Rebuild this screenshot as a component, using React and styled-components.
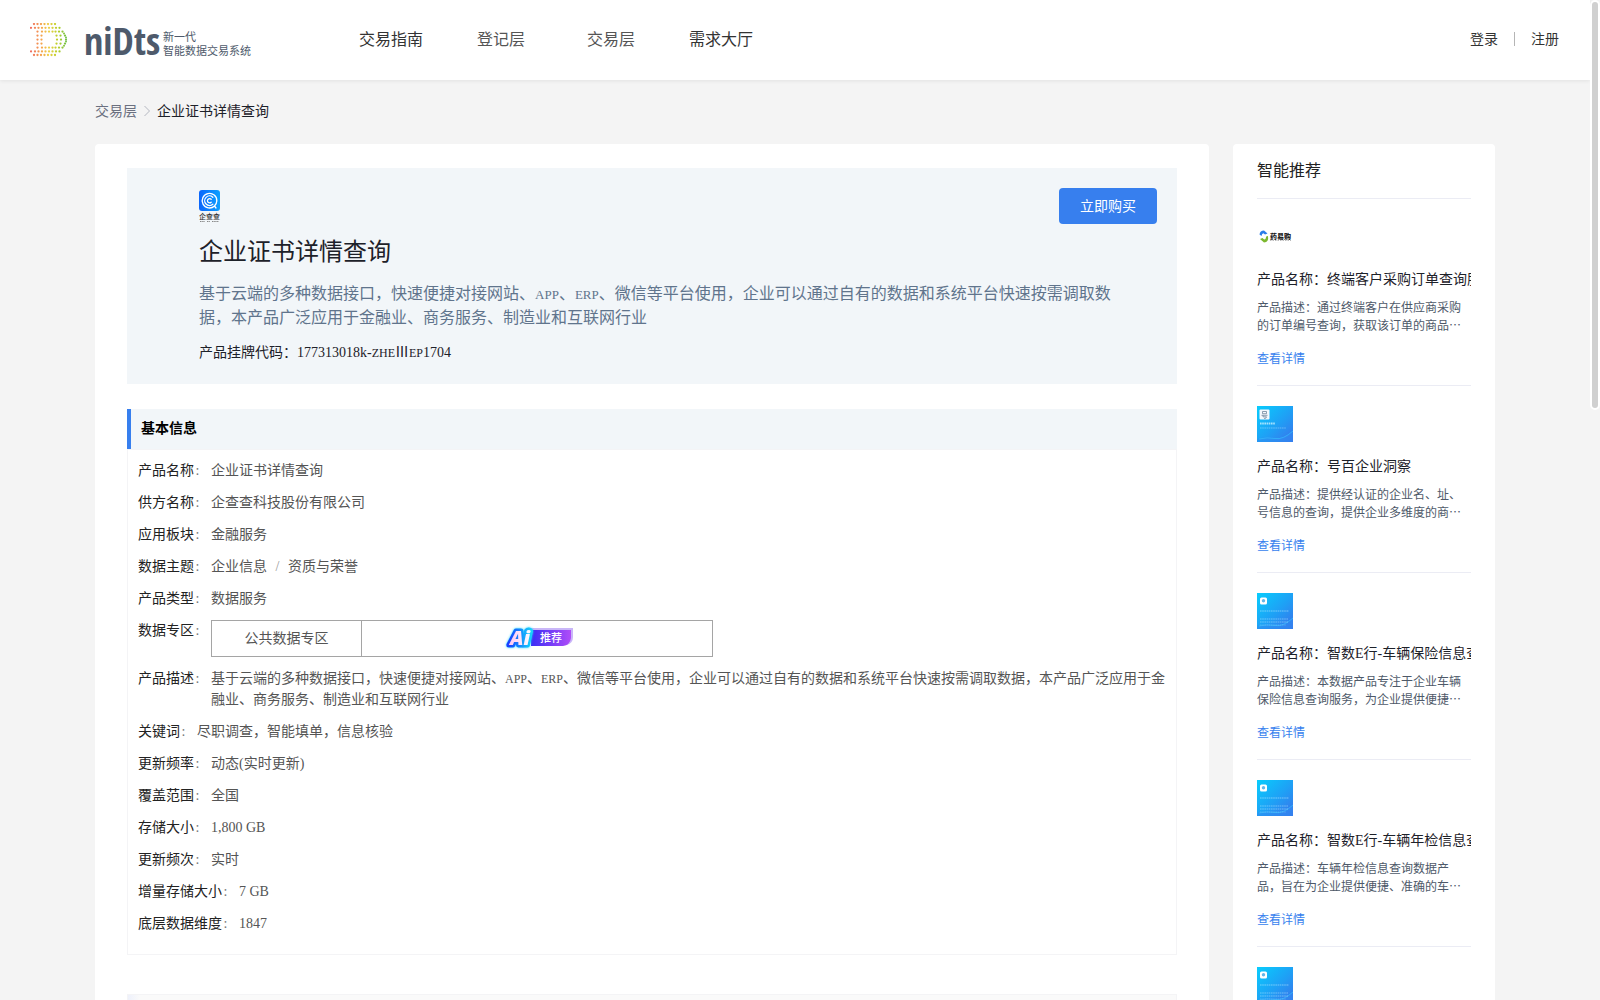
import React from 'react';
import styled, { createGlobalStyle, css } from 'styled-components';

const Global = createGlobalStyle`
  * { box-sizing: border-box; }
  html, body, #root { margin: 0; height: 100%; }
  body {
    background: #f4f4f4;
    color: #1d2129;
    font-family: "Liberation Serif", "Noto Sans CJK SC", sans-serif;
    font-size: 14px;
    line-height: 21px;
    overflow: hidden;
  }
  h1, h2, h3, p, ul, dl, dd, ol { margin: 0; padding: 0; font-weight: 400; }
  ul, ol { list-style: none; }
  a { color: inherit; text-decoration: none; }
  button { font-family: inherit; border: 0; cursor: pointer; }
`;

const Viewport = styled.div`
  height: 100vh;
  overflow: auto;
  padding-right: 10px;
  scrollbar-width: none;
`;
const ScrollThumb = styled.div`
  position: fixed;
  top: 0;
  right: 0;
  width: 10px;
  height: 41vh;
  border: 2px solid #fff;
  border-radius: 5px;
  background: #d0d0d0;
`;

const Header = styled.header`
  display: flex;
  align-items: center;
  height: 80px;
  padding: 0 31px 0 30px;
  background: #fff;
  box-shadow: 0 1px 4px rgba(0, 0, 0, 0.08);
`;
const Brand = styled.a`
  display: flex;
  align-items: center;
  width: 306px;
  color: #4e5a6b;
`;
const BrandName = styled.span`
  margin-left: 16px;
  width: 79px;
  font: 700 38px/40px "Liberation Sans Narrow", "Open Sans Condensed", "Liberation Sans", sans-serif;
`;
const BrandSub = styled.span`
  padding-top: 6px;
  font: 400 11px/14px "Noto Sans CJK SC", sans-serif;
  white-space: nowrap;
`;
const Nav = styled.nav`
  display: flex;
  flex: 1;
`;
const NavLink = styled.a`
  width: 110px;
  text-align: center;
  font-size: 16px;
  line-height: 26px;
  color: ${(p) => (p.$soft ? '#555' : '#333')};
`;
const Account = styled.div`
  display: flex;
  align-items: center;
  padding-bottom: 2px;
  color: #333;
`;
const AccountRule = styled.span`
  width: 1px;
  height: 14px;
  margin: 0 16px;
  background: #b5b5b5;
`;

const Page = styled.div`
  max-width: 1400px;
  margin: 0 auto;
`;
const Crumbs = styled.nav`
  display: flex;
  align-items: center;
  gap: 7px;
  height: 64px;
  padding-bottom: 2px;
  color: #6b7080;
  svg { display: block; }
  strong { font-weight: 400; color: #1d2129; }
`;
const Columns = styled.div`
  display: flex;
  align-items: flex-start;
  gap: 24px;
`;
const Card = styled.main`
  flex: 1;
  min-width: 0;
  min-height: 1000px;
  padding: 24px 32px;
  border-radius: 4px;
  background: #fff;
`;
const Aside = styled.aside`
  width: 262px;
  padding: 0 24px;
  border-radius: 4px;
  background: #fff;
`;

const Hero = styled.section`
  display: flex;
  align-items: flex-start;
  justify-content: space-between;
  height: 216px;
  padding: 20px 20px 0 72px;
  background: #f2f6f9;
`;
const HeroText = styled.div`
  flex: 1;
  padding-top: 2px;
`;
const HeroTitle = styled.h1`
  margin-top: 10px;
  font-size: 24px;
  line-height: 36px;
`;
const HeroDesc = styled.p`
  margin: 12px -56px 0 0;
  font-size: 16px;
  line-height: 24px;
  color: #60748c;
`;
const HeroCode = styled.p`
  margin-top: 12px;
`;
const Latin = styled.span`
  font-size: ${(p) => (p.$large ? '13px' : '12px')};
  line-height: 1;
`;
const BuyButton = styled.button`
  width: 98px;
  height: 36px;
  padding: 0 0 2px;
  border-radius: 4px;
  background: #377fee;
  color: #fff;
  font-size: 14px;
`;

const Section = styled.section`
  margin-top: 25px;
`;
const SectionTitle = styled.h2`
  padding-left: 10px;
  border-left: 4px solid #377fee;
  background: #f2f6f9;
  font-size: 14px;
  font-weight: 700;
  line-height: 40px;
  color: #000;
`;
const Facts = styled.dl`
  display: flex;
  flex-direction: column;
  gap: 11px;
  padding: 10px 8px 20px 10px;
  border: 1px solid #f4f4f6;
`;
const Fact = styled.div`
  display: flex;
  gap: 10px;
`;
const FactLabel = styled.dt`
  display: flex;
  flex: none;
  color: #222;
`;
const Colon = styled.span`
  width: 7px;
  text-align: center;
  color: #777;
`;
const FactValue = styled.dd`
  color: #555;
`;
const Slash = styled.span`
  display: inline-block;
  width: 21px;
  text-align: center;
  color: #999;
`;
const Zone = styled.div`
  display: flex;
  width: 502px;
  height: 37px;
  border: 1px solid #a5a5a5;
`;
const ZoneCell = styled.div`
  display: flex;
  align-items: center;
  justify-content: center;
  ${(p) =>
    p.$grow
      ? css`flex: 1;`
      : css`
          width: 150px;
          border-right: 1px solid #a5a5a5;
        `}
`;
const NextSection = styled.section`
  height: 60px;
  margin-top: 39px;
  border: 1px solid #f4f4f6;
  background: linear-gradient(90deg, #eef1fb, #fafafa 12px);
`;

const AsideTitle = styled.h2`
  padding: 15px 0;
  font-size: 16px;
  line-height: 24px;
  color: #222;
`;
const Item = styled.li`
  height: 187px;
  padding-top: 20px;
  border-top: 1px solid #ebecf4;
  svg { display: block; }
`;
const ItemName = styled.h3`
  margin-top: 14px;
  overflow: hidden;
  font-size: 14px;
  line-height: 21px;
  white-space: nowrap;
`;
const ItemDesc = styled.p`
  margin-top: 8px;
  font: 400 12px/18px "Noto Sans CJK SC", sans-serif;
  color: #4e5969;
`;
const ItemLink = styled.a`
  display: block;
  margin-top: 16px;
  font-size: 12px;
  line-height: 18px;
  color: #377fee;
`;

const DOT_ROWS = [
  { y: 1, xs: [4, 7.5, 11, 14.5, 18, 21.5, 25] },
  { y: 4.8, xs: [1, 5, 8.5, 12, 15.5, 19, 22.5, 26, 29.5] },
  { y: 8.6, xs: [7.5, 12, 15.5, 19, 22.5, 25.5, 29, 32.5] },
  { y: 12.6, xs: [7.5, 11.5, 26.5, 30.5, 35] },
  { y: 16.6, xs: [7.5, 11.5, 27, 31, 36] },
  { y: 20.6, xs: [7.5, 11.5, 26.5, 30.5, 35] },
  { y: 24.6, xs: [7.5, 12, 15.5, 19, 22.5, 25.5, 29, 32.5] },
  { y: 28.4, xs: [1, 5, 8.5, 12, 15.5, 19, 22.5, 26, 29.5] },
  { y: 32, xs: [4, 7.5, 11, 14.5, 18, 21.5, 25] },
];

function BrandMark() {
  return (
    <svg width="38" height="34" viewBox="0 0 38 34" aria-hidden="true">
      <defs>
        <linearGradient id="mark" gradientUnits="userSpaceOnUse" x1="0" y1="0" x2="37" y2="0">
          <stop offset="0" stopColor="#ee6a63" />
          <stop offset="0.3" stopColor="#f5a34e" />
          <stop offset="0.5" stopColor="#eed04a" />
          <stop offset="0.75" stopColor="#b9cf26" />
          <stop offset="1" stopColor="#6cc04a" />
        </linearGradient>
      </defs>
      <g fill="url(#mark)">
        {DOT_ROWS.map((r) => r.xs.map((x) => <circle key={`${x}-${r.y}`} cx={x} cy={r.y} r="1.15" />))}
        <circle cx="36" cy="14.6" r="1" />
        <circle cx="36" cy="18.6" r="1" />
        <circle cx="34" cy="10.4" r="1" />
        <circle cx="34" cy="22.8" r="1" />
      </g>
    </svg>
  );
}

function VendorLogo() {
  return (
    <svg width="22" height="34" viewBox="0 0 22 34" aria-hidden="true" style={{ display: 'block' }}>
      <defs>
        <linearGradient id="vendor" x1="0" x2="1">
          <stop offset="0" stopColor="#0c66fb" />
          <stop offset="1" stopColor="#0ca0ff" />
        </linearGradient>
      </defs>
      <rect width="21" height="21" rx="3" fill="url(#vendor)" />
      <g fill="none" stroke="#fff" strokeWidth="1.3" strokeLinecap="round">
        <path d="M15.5 16A7.3 7.3 0 1 1 17.8 11 7.3 7.3 0 0 1 15.5 16L17 18" />
        <path d="M13.8 7.2A4.8 4.8 0 1 0 13.8 14.2" />
        <path d="M12.2 9.2A2.2 2.2 0 1 0 12.2 12.3" />
      </g>
      <text x="0" y="29" fontSize="7" fontWeight="500" fill="#333" fontFamily="Noto Sans CJK SC">企查查</text>
      <path d="M1 31.500h5M8 31.500h3M13 31.500h7" stroke="#888" strokeWidth="1" strokeDasharray="1.5 0.7" />
    </svg>
  );
}

function AiBadge() {
  return (
    <svg width="76" height="28" viewBox="-8 0 76 28" role="img" aria-label="Ai推荐">
      <defs>
        <linearGradient id="tag" x1="0" x2="1">
          <stop offset="0" stopColor="#3a2df5" />
          <stop offset="1" stopColor="#b04cf8" />
        </linearGradient>
        <linearGradient id="edge" x1="0" x2="1">
          <stop offset="0" stopColor="#1a3cff" />
          <stop offset="1" stopColor="#14d4fb" />
        </linearGradient>
        <linearGradient id="ink" x1="0" x2="1">
          <stop offset="0" stopColor="#ffc6f2" />
          <stop offset="1" stopColor="#fff" />
        </linearGradient>
        <filter id="glow" x="-20%" y="-20%" width="140%" height="140%">
          <feDropShadow dx="0" dy="0" stdDeviation="0.8" floodColor="#20d8ff" />
        </filter>
      </defs>
      <path d="M24 3H66V12Q66 18 60 20H24Z" fill="#c9b6f8" />
      <path d="M24 5H64V13Q63 20 56 21H24Z" fill="url(#tag)" />
      <text
        x="3"
        y="19.500"
        fontSize="20"
        fontWeight="800"
        fontStyle="italic"
        fontFamily="Open Sans"
        stroke="url(#edge)"
        strokeWidth="5"
        strokeLinejoin="round"
        paintOrder="stroke"
        fill="url(#ink)"
        filter="url(#glow)"
      >
        Ai
      </text>
      <text x="33" y="17" fontSize="11" fontWeight="500" fill="#fff" fontFamily="Noto Sans CJK SC">推荐</text>
    </svg>
  );
}

function ShopLogo() {
  return (
    <svg width="36" height="36" viewBox="0 0 36 36" aria-hidden="true">
      <path d="M2.500 15.500Q3 11.500 7 11.500L10.500 14.500L8 15.500L6.500 14.300Q4.800 14.500 4.500 17Z" fill="#2b7de9" />
      <path d="M11 17Q12 23 7 23.500L3 20L5.500 19L7.200 20.600Q9 20.400 9.200 17.500Z" fill="#7cb82f" />
      <text x="13" y="19.500" fontSize="7" fontWeight="900" fill="#222" fontFamily="Noto Sans CJK SC">药易购</text>
      <path d="M13 21.500h21" stroke="#aaa" strokeWidth="0.8" strokeDasharray="1.5 1" />
    </svg>
  );
}

function Cover({ id, mark, lines }) {
  return (
    <svg width="36" height="36" viewBox="0 0 36 36" aria-hidden="true">
      <defs>
        <linearGradient id={id} x1="0" y1="0" x2="1" y2="1">
          <stop offset="0" stopColor="#08cdfd" />
          <stop offset="0.55" stopColor="#1f9ff5" />
          <stop offset="1" stopColor="#3b72ea" />
        </linearGradient>
      </defs>
      <rect width="36" height="36" fill={`url(#${id})`} />
      <path d="M0 33Q9 30 17 32T36 24V36H0Z" fill="#2f8cf2" opacity="0.5" />
      <path d="M2 33Q10 31 18 32.5T36 25" fill="none" stroke="#35b6fb" strokeWidth="0.8" />
      {mark ? (
        <>
          <rect x="2.5" y="3.5" width="10" height="10" rx="1" fill="#f4f8fc" />
          <path d="M5.5 5.5h4v2.200h-4zM4.500 9.300h6M6 9.300v1.500h3.500q0 2-2.500 1.600" fill="none" stroke="#71869c" strokeWidth="0.8" />
        </>
      ) : (
        <>
          <rect x="3" y="4.500" width="7" height="7" rx="1.500" fill="#fff" />
          <circle cx="6.500" cy="7.800" r="1.700" fill="#65b7e8" />
        </>
      )}
      <g stroke="#c8f0ff" strokeDasharray="1.600 0.600">
        {lines.map(([y, w, h, o]) => (
          <path key={y} d={`M3 ${y}h${w}`} strokeWidth={h} opacity={o} />
        ))}
      </g>
    </svg>
  );
}

const COVER_A = [[17.5, 15, 2, 0.8], [22, 26, 1.2, 0.4]];
const COVER_B = [[18, 29, 1.6, 0.35], [26, 28, 1.4, 0.3], [29, 28, 1.4, 0.3], [32, 26, 1.2, 0.25]];

const DESC_HEAD = '基于云端的多种数据接口，快速便捷对接网站、';
const DESC_TAIL =
  '微信等平台使用，企业可以通过自有的数据和系统平台快速按需调取数据，本产品广泛应用于金融业、商务服务、制造业和互联网行业';

function Description({ large }) {
  return (
    <>
      {DESC_HEAD}
      <Latin $large={large}>APP</Latin>、<Latin $large={large}>ERP</Latin>、{DESC_TAIL}
    </>
  );
}

const FACTS = [
  ['产品名称', '企业证书详情查询'],
  ['供方名称', '企查查科技股份有限公司'],
  ['应用板块', '金融服务'],
  ['数据主题', <>企业信息<Slash>/</Slash>资质与荣誉</>],
  ['产品类型', '数据服务'],
  [
    '数据专区',
    <Zone>
      <ZoneCell>公共数据专区</ZoneCell>
      <ZoneCell $grow><AiBadge /></ZoneCell>
    </Zone>,
  ],
  ['产品描述', <Description />],
  ['关键词', '尽职调查，智能填单，信息核验'],
  ['更新频率', '动态(实时更新)'],
  ['覆盖范围', '全国'],
  ['存储大小', '1,800 GB'],
  ['更新频次', '实时'],
  ['增量存储大小', '7 GB'],
  ['底层数据维度', '1847'],
];

const ITEMS = [
  { name: '终端客户采购订单查询服务', desc: '通过终端客户在供应商采购的订单编号查询，获取该订单的商品…', art: <ShopLogo /> },
  { name: '号百企业洞察', desc: '提供经认证的企业名、址、号信息的查询，提供企业多维度的商…', art: <Cover id="c1" mark lines={COVER_A} /> },
  { name: '智数E行-车辆保险信息查询', desc: '本数据产品专注于企业车辆保险信息查询服务，为企业提供便捷…', art: <Cover id="c2" lines={COVER_B} /> },
  { name: '智数E行-车辆年检信息查询', desc: '车辆年检信息查询数据产品，旨在为企业提供便捷、准确的车…', art: <Cover id="c3" lines={COVER_B} /> },
  { name: '智数E行', desc: '', art: <Cover id="c4" lines={COVER_B} /> },
];

export default function App() {
  return (
    <>
      <Global />
      <Viewport>
        <Header>
          <Brand href="#">
            <BrandMark />
            <BrandName>niDts</BrandName>
            <BrandSub>新一代<br />智能数据交易系统</BrandSub>
          </Brand>
          <Nav>
            <NavLink href="#">交易指南</NavLink>
            <NavLink href="#" $soft>登记层</NavLink>
            <NavLink href="#" $soft>交易层</NavLink>
            <NavLink href="#">需求大厅</NavLink>
          </Nav>
          <Account>
            <a href="#">登录</a>
            <AccountRule />
            <a href="#">注册</a>
          </Account>
        </Header>
        <Page>
          <Crumbs>
            <a href="#">交易层</a>
            <svg width="6" height="12" viewBox="0 0 6 12" aria-hidden="true">
              <path d="M0.500 1L5.500 6L0.500 11" fill="none" stroke="#b4b7c0" />
            </svg>
            <strong>企业证书详情查询</strong>
          </Crumbs>
          <Columns>
            <Card>
              <Hero>
                <HeroText>
                  <VendorLogo />
                  <HeroTitle>企业证书详情查询</HeroTitle>
                  <HeroDesc><Description large /></HeroDesc>
                  <HeroCode>
                    产品挂牌代码：177313018k-<Latin>ZHE</Latin>Ⅲ<Latin>EP</Latin>1704
                  </HeroCode>
                </HeroText>
                <BuyButton type="button">立即购买</BuyButton>
              </Hero>
              <Section>
                <SectionTitle>基本信息</SectionTitle>
                <Facts>
                  {FACTS.map(([label, value]) => (
                    <Fact key={label}>
                      <FactLabel>{label}<Colon>:</Colon></FactLabel>
                      <FactValue>{value}</FactValue>
                    </Fact>
                  ))}
                </Facts>
              </Section>
              <NextSection />
            </Card>
            <Aside>
              <AsideTitle>智能推荐</AsideTitle>
              <ul>
                {ITEMS.map((item) => (
                  <Item key={item.name}>
                    {item.art}
                    <ItemName>产品名称：{item.name}</ItemName>
                    <ItemDesc>产品描述：{item.desc}</ItemDesc>
                    <ItemLink href="#">查看详情</ItemLink>
                  </Item>
                ))}
              </ul>
            </Aside>
          </Columns>
        </Page>
      </Viewport>
      <ScrollThumb />
    </>
  );
}
